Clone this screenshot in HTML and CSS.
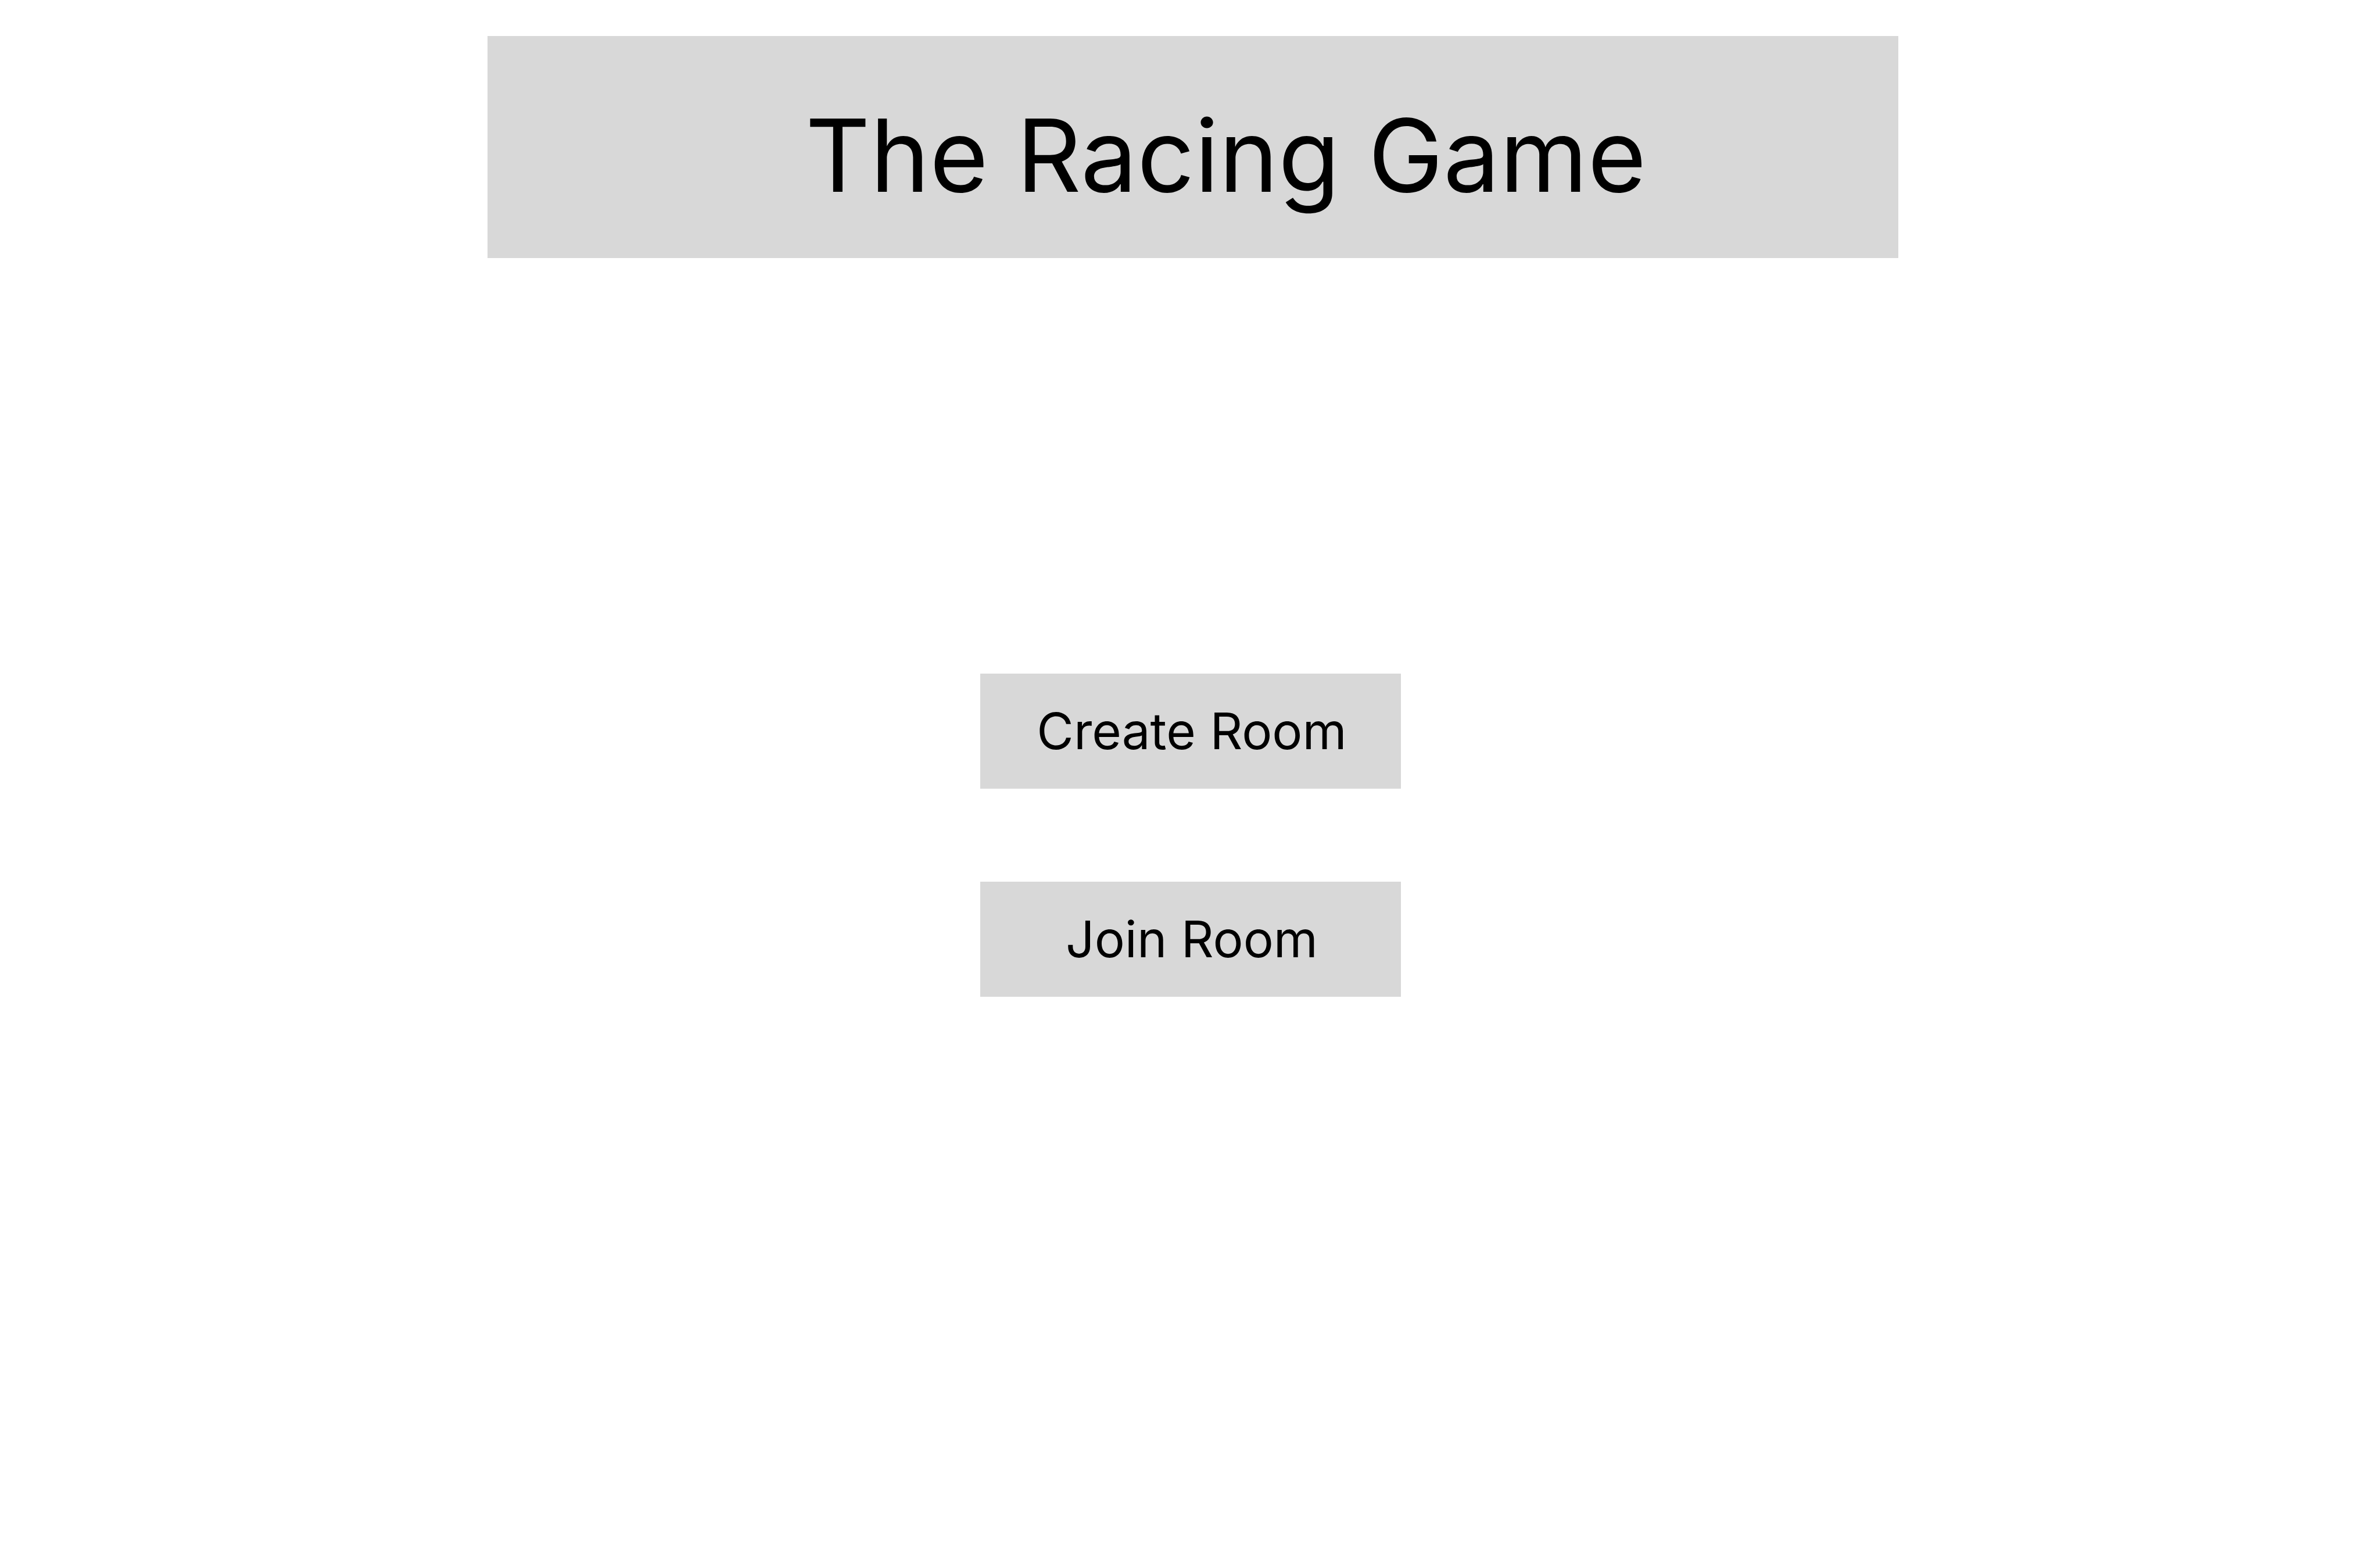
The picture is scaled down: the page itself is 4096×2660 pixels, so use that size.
FILE: index.html
```html
<!DOCTYPE html>
<html lang="en">
<head>
<meta charset="utf-8">
<title>The Racing Game</title>
<link rel="stylesheet" href="styles.css">
</head>
<body>
<header class="banner"><h1 class="title">The Racing Game</h1></header>
<main class="menu">
<button class="menu-button" type="button">Create Room</button>
<button class="menu-button" type="button">Join Room</button>
</main>
</body>
</html>
```
FILE: styles.css
```css
* { box-sizing: border-box; }
body {
  margin: 0;
  padding: 62px 829px 0 839px;
  background: #fff;
  color: #000;
  font-family: Inter, sans-serif;
}
.banner {
  padding: 100px 0 72px 547px;
  background: #d8d8d8;
}
.title {
  margin: 0;
  font-size: 173px;
  font-weight: 400;
  line-height: 210px;
  white-space: nowrap;
}
.menu {
  display: flex;
  flex-direction: column;
  align-items: center;
  gap: 160px;
  margin-top: 715px;
  padding-right: 8px;
}
.menu-button {
  width: 724px;
  padding: 46px 0 46px 4px;
  border: 0;
  background: #d8d8d8;
  color: inherit;
  font: 400 87px/106px Inter, sans-serif;
}
```
